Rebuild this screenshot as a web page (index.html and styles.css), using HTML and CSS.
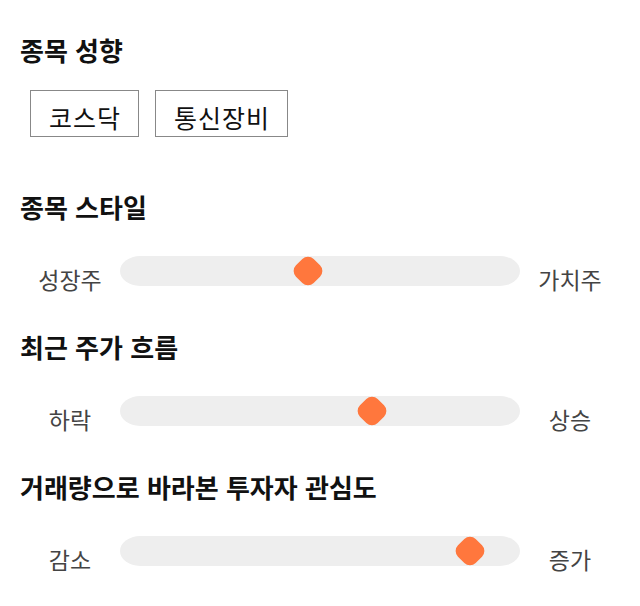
FILE: index.html
```html
<!DOCTYPE html>
<html lang="ko">
<head>
	<meta charset="UTF-8"/>
	<meta name="viewport" content="width=device-width, initial-scale=1"/>
	<title>종목 분석</title>
	<link rel="stylesheet" href="styles.css">
</head>
<body>

<div class="page">
	<section class="section">
		<h2>종목 성향</h2>
		<div class="tags">
			<span class="tag">코스닥</span>
			<span class="tag">통신장비</span>
		</div>
	</section>

	<section class="section">
		<h2>종목 스타일</h2>
		<div class="slider-row">
			<span class="slider-label">성장주</span>
			<div class="track">
				<span class="thumb" style="left: 47%;"></span>
			</div>
			<span class="slider-label">가치주</span>
		</div>
	</section>

	<section class="section">
		<h2>최근 주가 흐름</h2>
		<div class="slider-row">
			<span class="slider-label">하락</span>
			<div class="track">
				<span class="thumb" style="left: 63%;"></span>
			</div>
			<span class="slider-label">상승</span>
		</div>
	</section>

	<section class="section">
		<h2>거래량으로 바라본 투자자 관심도</h2>
		<div class="slider-row">
			<span class="slider-label">감소</span>
			<div class="track">
				<span class="thumb" style="left: 87.5%;"></span>
			</div>
			<span class="slider-label">증가</span>
		</div>
	</section>
</div>

</body>
</html>
```

FILE: styles.css
```css
body {
    margin: 0;
    background-color: #fff;
    font-family: "Noto Sans CJK KR", "Noto Sans", sans-serif;
    color: #111;
}

.page {
    padding: 34px 20px 0;
}

.section {
    padding-bottom: 37px;
}

.section:first-child {
    padding-bottom: 41px;
}

.section:last-child {
    padding-bottom: 0;
}

h2 {
    margin: 0 0 24px;
    font-size: 26px;
    line-height: 32px;
    font-weight: bold;
    color: #111;
}

.tags {
    display: flex;
    gap: 16px;
    padding-left: 10px;
    margin-bottom: 13px;
}

.tag {
    box-sizing: border-box;
    height: 47px;
    padding: 10px 17px 0 18px;
    border: 1px solid #888;
    font-size: 25px;
    line-height: 32px;
    letter-spacing: 1px;
    color: #111;
}

.slider-row {
    display: flex;
    align-items: flex-start;
    padding-top: 9px;
}

.slider-label {
    width: 100px;
    margin-top: 8px;
    text-align: center;
    font-size: 23px;
    line-height: 30px;
    color: #444;
}

.track {
    position: relative;
    width: 400px;
    height: 30px;
    background-color: #eee;
    border-radius: 20px / 15px;
}

.thumb {
    position: absolute;
    top: 50%;
    width: 25px;
    height: 25px;
    border-radius: 8px;
    background-color: #ff773d;
    transform: translate(-50%, -50%) rotate(45deg);
}
```
